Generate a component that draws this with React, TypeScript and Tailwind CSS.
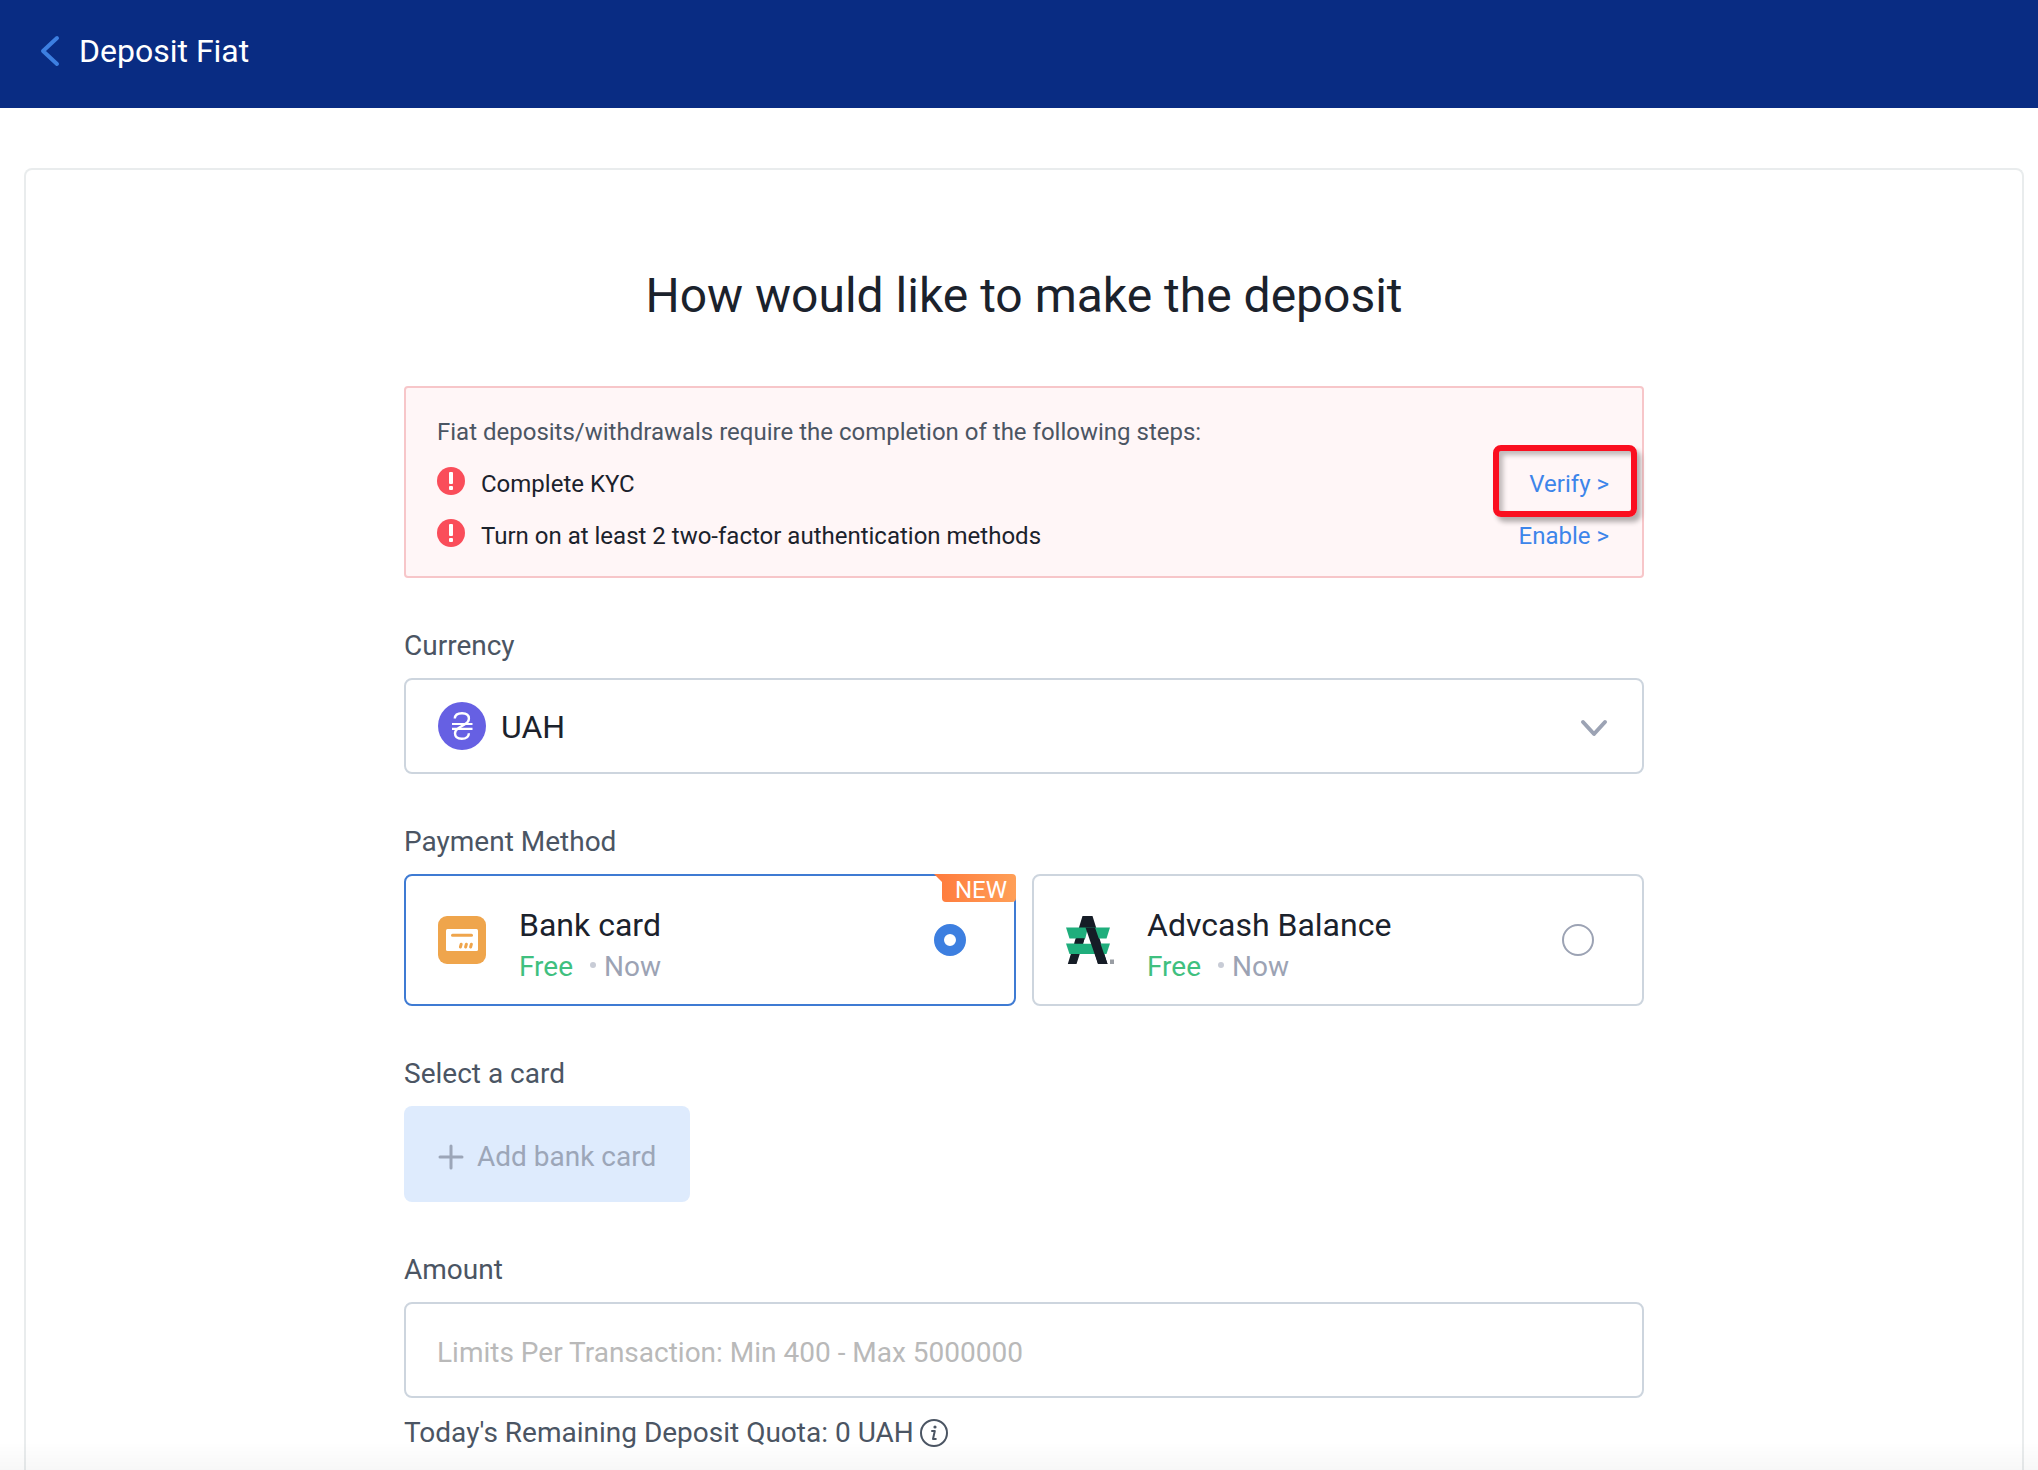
import { useState } from 'react';

const METHODS = [
  { id: 'card', name: 'Bank card', isNew: true },
  { id: 'advcash', name: 'Advcash Balance', isNew: false },
];

function BackIcon() {
  return (
    <svg className="h-8 w-5" viewBox="0 0 20 32" fill="none" stroke="#3d7fe0" strokeWidth="4" strokeLinecap="round" strokeLinejoin="round">
      <path d="M17 3L3 16l14 13" />
    </svg>
  );
}

function AlertIcon() {
  return (
    <svg className="mb-1.5 h-7 w-7 shrink-0" viewBox="0 0 28 28">
      <circle cx="14" cy="14" r="14" fill="#fa4d5a" />
      <rect x="12" y="5" width="4" height="12" rx="1" fill="#fff" />
      <rect x="12" y="19" width="4" height="4" rx="1" fill="#fff" />
    </svg>
  );
}

function HryvniaIcon() {
  return (
    <svg className="h-12 w-12" viewBox="0 0 48 48">
      <circle cx="24" cy="24" r="24" fill="#6660e3" />
      <g fill="none" stroke="#fff" strokeWidth="2.4">
        <path d="M16.800 16.500C17 13 19.800 11.200 24 11.200c4.300 0 6.900 2 6.900 5.300 0 2.500-1.400 4.300-4.400 6l-5.500 3.200c-2.800 1.700-4 3.300-4 5.600 0 3.500 2.500 5.500 6.700 5.500 4.400 0 7-1.900 7.200-5.600" />
        <path d="M14 22h20.500M14 26.800h20.500" strokeWidth="2.200" />
      </g>
    </svg>
  );
}

function BankCardIcon() {
  return (
    <svg className="h-12 w-12 shrink-0" viewBox="0 0 48 48">
      <rect width="48" height="48" rx="9" fill="#efa54c" />
      <rect x="8" y="13" width="32" height="22" rx="1.500" fill="#fff" />
      <path d="M14.500 19.300h19" stroke="#efa54c" strokeWidth="3" strokeLinecap="round" />
      <path d="M22.400 31l.8-2.800M27.600 31l.8-2.800M32.600 31l.8-2.800" stroke="#efa54c" strokeWidth="3" strokeLinecap="round" />
    </svg>
  );
}

function AdvcashIcon() {
  return (
    <svg className="h-12 w-12 shrink-0" viewBox="0 0 48 48">
      <path d="M16.500 0h10L41.500 48h-9.500L21.800 13 10.500 48H1.800z" fill="#151c26" />
      <path d="M0 11.500h44l-3.500 11H3.500z" fill="#1fae7c" />
      <path d="M0 27.500h44l-3.500 10.500H3.500z" fill="#1fae7c" />
      <path d="M22 11.500l3.800 16h-8l1.500-5z" fill="#fff" />
      <path d="M10.500 22.500h8l-1.600 5H9z" fill="#151c26" />
      <path d="M19.500 11.500h9.500L41.500 48h-9.500z" fill="#151c26" />
      <path d="M44 43.500h4V48h-4z" fill="#999da3" />
    </svg>
  );
}

function InfoIcon() {
  return (
    <svg className="h-7 w-7" viewBox="0 0 28 28" fill="none" stroke="#4b5563">
      <circle cx="14" cy="14" r="13" strokeWidth="2" />
      <path d="M12 12h2.800l-1.800 8h2.800" strokeWidth="2" strokeLinecap="round" strokeLinejoin="round" />
      <circle cx="15" cy="8" r="1.600" fill="#4b5563" stroke="none" />
    </svg>
  );
}

export default function App() {
  const [method, setMethod] = useState('card');
  const [currency, setCurrency] = useState('UAH');
  const [amount, setAmount] = useState('');

  return (
    <div className="flex min-h-screen flex-col bg-white font-['Roboto',sans-serif] text-[#1b222c]">
      <header className="flex h-[108px] items-center gap-[19px] bg-[#092c83] px-10 pb-1.5">
        <button type="button" aria-label="Back">
          <BackIcon />
        </button>
        <h1 className="text-[32px] leading-10 text-white">Deposit Fiat</h1>
      </header>

      <main className="mt-[60px] mr-[14px] ml-6 flex-1 rounded-t-lg border-2 border-b-0 border-[#e9eced] px-8">
        <div className="mx-auto max-w-[1240px]">
          <h2 className="mt-[94px] text-center text-5xl leading-[64px]">How would like to make the deposit</h2>

          <section className="mt-[58px] rounded-sm border-2 border-[#f7c6c9] bg-[#fff6f7] pt-[18px] pr-[33px] pb-[14px] pl-[31px] text-2xl leading-[52px]">
            <p className="text-[#4b5563]">Fiat deposits/withdrawals require the completion of the following steps:</p>
            <ul>
              <li className="flex items-center gap-4">
                <AlertIcon />
                <span className="flex-1">Complete KYC</span>
                <span className="relative">
                  <a href="#verify" className="text-[#3d85ea]">Verify &gt;</a>
                  <span className="pointer-events-none absolute -top-[13px] -right-7 -bottom-[7px] -left-9 rounded-lg border-6 border-[#fa0f20] shadow-[4px_5px_5px_rgba(0,0,0,0.3),inset_4px_4px_5px_rgba(0,0,0,0.25)]" />
                </span>
              </li>
              <li className="flex items-center gap-4">
                <AlertIcon />
                <span className="flex-1">Turn on at least 2 two-factor authentication methods</span>
                <a href="#enable" className="text-[#3d85ea]">Enable &gt;</a>
              </li>
            </ul>
          </section>

          <form className="mt-[50px] flex flex-col gap-[50px] text-[28px] leading-9 text-[#4b5563]">
            <div className="flex flex-col gap-[14px]">
              <label htmlFor="currency">Currency</label>
              <div className="relative">
                <select
                  id="currency"
                  value={currency}
                  onChange={(e) => setCurrency(e.target.value)}
                  className="block h-24 w-full appearance-none rounded-lg border-2 border-[#cdd5de] bg-white pt-0.5 pl-[95px] text-[32px] text-[#1b222c]"
                >
                  <option value="UAH">UAH</option>
                </select>
                <span className="pointer-events-none absolute top-6 left-[34px]">
                  <HryvniaIcon />
                </span>
                <svg className="pointer-events-none absolute top-10 right-9 h-5 w-7" viewBox="0 0 28 20" fill="none" stroke="#9ca3b4" strokeWidth="4" strokeLinecap="round" strokeLinejoin="round">
                  <path d="M3 4l11 12L25 4" />
                </svg>
              </div>
            </div>

            <fieldset>
              <legend className="mb-[14px]">Payment Method</legend>
              <div className="grid grid-cols-2 gap-4">
                {METHODS.map((m) => (
                  <label
                    key={m.id}
                    className={`relative flex h-[132px] items-center gap-[33px] rounded-lg border-2 pr-12 pl-8 ${method === m.id ? 'border-[#3f7bd3]' : 'border-[#cdd5de]'}`}
                  >
                    {m.id === 'card' ? <BankCardIcon /> : <AdvcashIcon />}
                    <span className="flex flex-1 flex-col pt-3">
                      <span className="text-[32px] leading-[42px] text-[#1b222c]">{m.name}</span>
                      <span className="flex items-center leading-[42px] text-[#9ca3b4]">
                        <span className="text-[#3fc07f]">Free</span>
                        <span className="mr-2 mb-1 ml-[17px] h-1.5 w-1.5 rounded-full bg-[#c8ccd6]" />
                        Now
                      </span>
                    </span>
                    <input
                      type="radio"
                      name="method"
                      value={m.id}
                      checked={method === m.id}
                      onChange={() => setMethod(m.id)}
                      className="h-8 w-8 appearance-none rounded-full border-2 border-[#9ca3b4] bg-white checked:border-10 checked:border-[#3d7fe0]"
                    />
                    {m.isNew && (
                      <span className="absolute -top-0.5 -right-0.5 flex h-7 w-[82px] items-center justify-end pr-[9px] text-2xl text-white">
                        <svg className="absolute inset-0 h-full w-full" viewBox="0 0 82 28" preserveAspectRatio="none">
                          <defs>
                            <linearGradient id="newBadge">
                              <stop offset="0" stopColor="#ff7a3c" />
                              <stop offset="1" stopColor="#ff9f57" />
                            </linearGradient>
                          </defs>
                          <path d="M0 0h78q4 0 4 4v20q0 4-4 4H12q-4 0-4-4V8z" fill="url(#newBadge)" />
                        </svg>
                        <span className="relative mt-1">NEW</span>
                      </span>
                    )}
                  </label>
                ))}
              </div>
            </fieldset>

            <div className="flex flex-col items-start gap-[14px]">
              <span>Select a card</span>
              <button type="button" className="flex h-24 items-center gap-[13px] rounded-lg bg-[#deebfd] px-[34px] pt-1.5 text-[#9ca6b8]">
                <svg className="h-[26px] w-[26px]" viewBox="0 0 26 26" fill="none" stroke="currentColor" strokeWidth="3" strokeLinecap="round">
                  <path d="M13 2v22M2 13h22" />
                </svg>
                Add bank card
              </button>
            </div>

            <div className="flex flex-col">
              <label htmlFor="amount" className="mb-[14px]">Amount</label>
              <input
                id="amount"
                type="text"
                value={amount}
                onChange={(e) => setAmount(e.target.value)}
                placeholder="Limits Per Transaction: Min 400 - Max 5000000"
                className="h-24 w-full rounded-lg border-2 border-[#cdd5de] bg-white px-[31px] pt-1 placeholder:text-[#b9b9b9]"
              />
              <p className="mt-[17px] flex items-center gap-1.5">
                Today's Remaining Deposit Quota: 0 UAH
                <InfoIcon />
              </p>
            </div>
          </form>
        </div>
      </main>

      <div className="pointer-events-none fixed inset-x-0 bottom-0 h-7 bg-linear-to-b from-black/0 to-black/3" />
    </div>
  );
}
